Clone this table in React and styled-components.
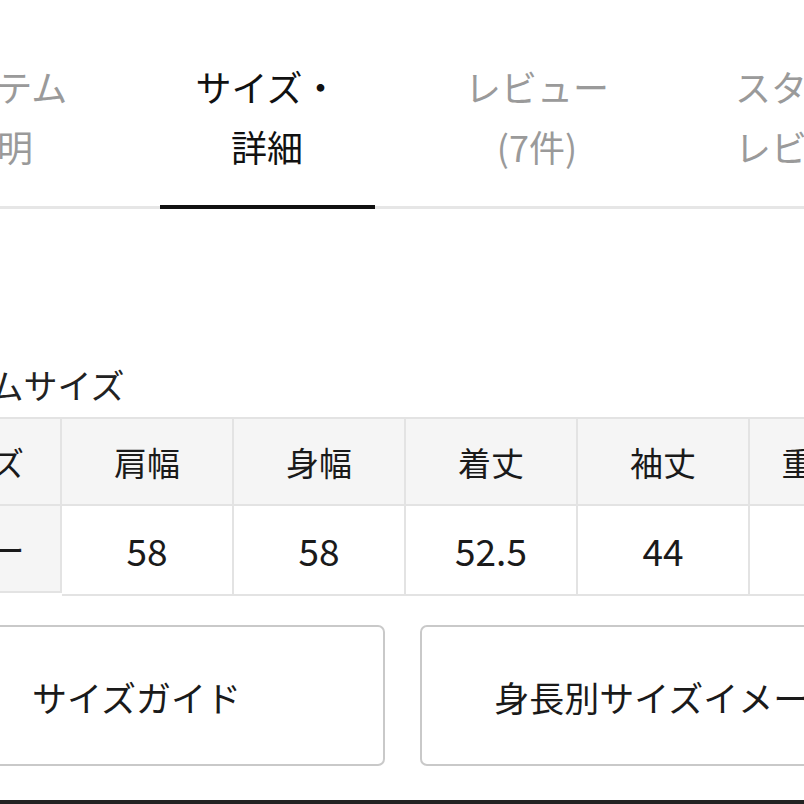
import styled, { createGlobalStyle } from "styled-components";

const Global = createGlobalStyle`
  html, body {
    margin: 0;
    padding: 0;
    background: #fff;
  }
  body {
    font-family: "Noto Sans CJK JP", "Noto Sans", sans-serif;
    color: #222;
    overflow: hidden;
  }
`;

const Page = styled.div`
  width: 804px;
  height: 804px;
  overflow: hidden;
  position: relative;
  display: flex;
  flex-direction: column;
`;

const TabBar = styled.div`
  display: flex;
  margin-left: -138px;
  width: 1080px;
  border-bottom: 3px solid #e6e6e6;
`;

const Tab = styled.div`
  width: 270px;
  flex-shrink: 0;
  box-sizing: border-box;
  padding: 56px 0 30px;
  text-align: center;
  font-size: 36px;
  line-height: 60px;
  color: ${(p) => (p.active ? "#111" : "#9a9a9a")};
  position: relative;
  &::after {
    content: "";
    display: ${(p) => (p.active ? "block" : "none")};
    position: absolute;
    left: 28px;
    right: 27px;
    bottom: -3px;
    height: 4px;
    background: #111;
  }
`;

const Line = styled.div`
  white-space: nowrap;
`;

const Content = styled.div`
  margin-left: -112px;
  width: 1034px;
  padding-top: 155px;
`;

const Title = styled.div`
  font-size: 34px;
  line-height: 42px;
  padding-left: 3px;
  margin-bottom: 11px;
  white-space: nowrap;
`;

const Table = styled.div`
  display: grid;
  grid-template-columns: repeat(6, 172px);
  border-top: 2px solid #e3e3e3;
  border-left: 2px solid #e3e3e3;
`;

const Cell = styled.div`
  height: ${(p) => (p.head ? "85px" : "88px")};
  display: flex;
  align-items: center;
  justify-content: center;
  border-right: 2px solid #e3e3e3;
  border-bottom: 2px solid #e3e3e3;
  background: ${(p) => (p.head ? "#f5f5f5" : "#fff")};
  font-size: ${(p) => (p.num ? "37px" : "33px")};
  color: #1a1a1a;
  white-space: nowrap;
`;

const Buttons = styled.div`
  display: flex;
  gap: 35px;
  margin-top: 29px;
`;

const Button = styled.div`
  width: 497px;
  height: 141px;
  box-sizing: border-box;
  border: 2px solid #c9c9c9;
  border-radius: 7px;
  display: flex;
  align-items: center;
  justify-content: center;
  padding-top: 2px;
  font-size: 35px;
  color: #1a1a1a;
  white-space: nowrap;
`;

const BottomBar = styled.div`
  margin-top: auto;
  height: 4px;
  background: #222;
`;

const tabs = [
  ["アイテム", "説明"],
  ["サイズ・", "詳細"],
  ["レビュー", "(7件)"],
  ["スタッフ", "レビュー"],
];

const heads = ["サイズ", "肩幅", "身幅", "着丈", "袖丈", "重量(g)"];
const values = ["フリー", "58", "58", "52.5", "44", "390"];

const App = () => {
  return (
    <Page>
      <Global />
      <TabBar>
        {tabs.map((t, i) => (
          <Tab key={i} active={i === 1}>
            <Line>{t[0]}</Line>
            <Line>{t[1]}</Line>
          </Tab>
        ))}
      </TabBar>
      <Content>
        <Title>アイテムサイズ</Title>
        <Table>
          {heads.map((h) => (
            <Cell key={h} head>
              {h}
            </Cell>
          ))}
          {values.map((v, i) => (
            <Cell key={i} head={i === 0} num={i > 0}>
              {v}
            </Cell>
          ))}
        </Table>
        <Buttons>
          <Button>サイズガイド</Button>
          <Button>身長別サイズイメージ</Button>
        </Buttons>
      </Content>
      <BottomBar />
    </Page>
  );
};

export default App;
